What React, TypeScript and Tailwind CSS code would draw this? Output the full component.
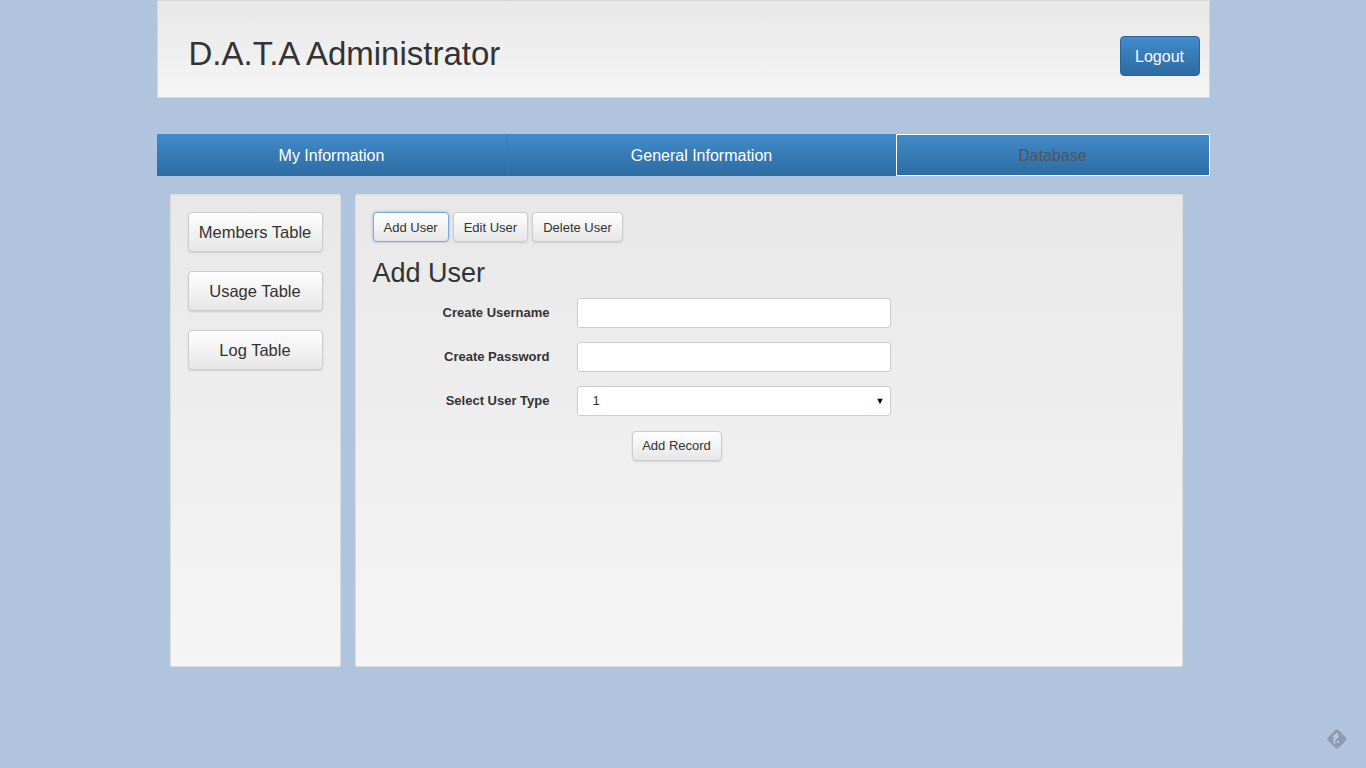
import { useState } from "react";

const sideItems = ["Members Table", "Usage Table", "Log Table"];
const tabs = ["Add User", "Edit User", "Delete User"];

const btn =
  "bg-gradient-to-b from-white to-[#e6e6e6] border rounded-[4px] text-[#333]";

const App = () => {
  const [active, setActive] = useState("Add User");
  const [userType, setUserType] = useState("1");

  return (
    <div className="min-h-[768px] bg-[#b0c4de] font-['Liberation_Sans',Arial,sans-serif] text-[#333] relative">
      <div className="w-[1053px] mx-auto">
        {/* Header */}
        <div className="h-[98px] flex items-start justify-between border border-[#d6d6d6] bg-gradient-to-b from-[#e8e8e8] to-[#f5f5f5] pl-[31px] pr-[9px] pt-[35px]">
          <h1 className="text-[33px] leading-none text-[#333] mt-[1px]">D.A.T.A Administrator</h1>
          <button className="w-[80px] h-[40px] rounded-[4px] bg-gradient-to-b from-[#428bca] to-[#2d6ca2] border border-[#2b669a] text-white text-[16px] pt-[1px]">
            Logout
          </button>
        </div>

        {/* Nav */}
        <div className="mt-[36px] h-[42px] flex bg-gradient-to-b from-[#428bca] to-[#2d6ca2] text-[16px]">
          <div className="w-[351px] flex items-center justify-center text-white border-r border-[#3a7ab8] pt-[1px]">My Information</div>
          <div className="w-[388px] flex items-center justify-center text-white pt-[1px]">General Information</div>
          <div className="flex-1 flex items-center justify-center text-[#555] border border-white pt-[1px]">Database</div>
        </div>

        {/* Body */}
        <div className="mt-[18px] flex gap-[14px] pl-[13px]">
          <div className="w-[171px] h-[473px] bg-gradient-to-b from-[#e8e8e8] to-[#f5f5f5] border border-[#ddd] rounded-[2px] pt-[17px] pl-[17px] flex flex-col gap-[19px]">
            {sideItems.map((s) => (
              <button
                key={s}
                className={`${btn} border-[#ccc] shadow-[0_1px_2px_rgba(0,0,0,0.12)] w-[135px] h-[40px] text-[16.5px] pt-[1px]`}
              >
                {s}
              </button>
            ))}
          </div>

          <div className="w-[828px] h-[473px] bg-gradient-to-b from-[#e8e8e8] to-[#f5f5f5] border border-[#ddd] rounded-[2px] pt-[17px] pl-[17px]">
            <div className="flex gap-[4px]">
              {tabs.map((t) => (
                <button
                  key={t}
                  onClick={() => setActive(t)}
                  className={`${btn} h-[30px] px-[10px] text-[13px] pt-[1px] ${
                    active === t
                      ? "border-[#7ea6e0] shadow-[0_0_3px_rgba(82,130,220,0.55)]"
                      : "border-[#ccc] shadow-[0_1px_2px_rgba(0,0,0,0.12)]"
                  }`}
                >
                  {t}
                </button>
              ))}
            </div>

            <h2 className="text-[27px] leading-none mt-[18px] text-[#333]">{active}</h2>

            <div className="mt-[11px] flex flex-col gap-[14px]">
              <div className="flex items-center">
                <label className="w-[177px] text-right text-[13px] font-bold">Create Username</label>
                <input className="ml-[27px] w-[314px] h-[30px] bg-white border border-[#ccc] rounded-[3px] px-2 text-[13px] outline-none" />
              </div>
              <div className="flex items-center">
                <label className="w-[177px] text-right text-[13px] font-bold">Create Password</label>
                <input
                  type="password"
                  className="ml-[27px] w-[314px] h-[30px] bg-white border border-[#ccc] rounded-[3px] px-2 text-[13px] outline-none"
                />
              </div>
              <div className="flex items-center">
                <label className="w-[177px] text-right text-[13px] font-bold">Select User Type</label>
                <div className="ml-[27px] w-[314px] h-[30px] bg-white border border-[#ccc] rounded-[3px] relative flex items-center">
                  <select
                    value={userType}
                    onChange={(e) => setUserType(e.target.value)}
                    className="appearance-none w-full h-full bg-transparent pl-[15px] text-[13px] outline-none"
                  >
                    <option value="1">1</option>
                    <option value="2">2</option>
                    <option value="3">3</option>
                  </select>
                  <span className="absolute right-[5px] top-[8px] text-[9px] pointer-events-none text-black">▼</span>
                </div>
              </div>
            </div>

            <div className="mt-[15px] pl-[259px]">
              <button className={`${btn} border-[#ccc] shadow-[0_1px_2px_rgba(0,0,0,0.12)] w-[90px] h-[30px] text-[13px]`}>
                Add Record
              </button>
            </div>
          </div>
        </div>
      </div>

      {/* corner icon */}
      <svg className="absolute left-[1325px] top-[727px]" width="24" height="24" viewBox="0 0 24 24">
        <rect x="4.5" y="4.5" width="15" height="15" rx="3" transform="rotate(45 12 12)" fill="#8e9cb1" />
        <path d="M9 10 L12 7 M9 13 L13 9 M9 16 L10 15" stroke="#c9d4e4" strokeWidth="1.7" strokeLinecap="round" />
        <circle cx="13" cy="15" r="1.1" fill="#c9d4e4" />
      </svg>
    </div>
  );
};

export default App;
